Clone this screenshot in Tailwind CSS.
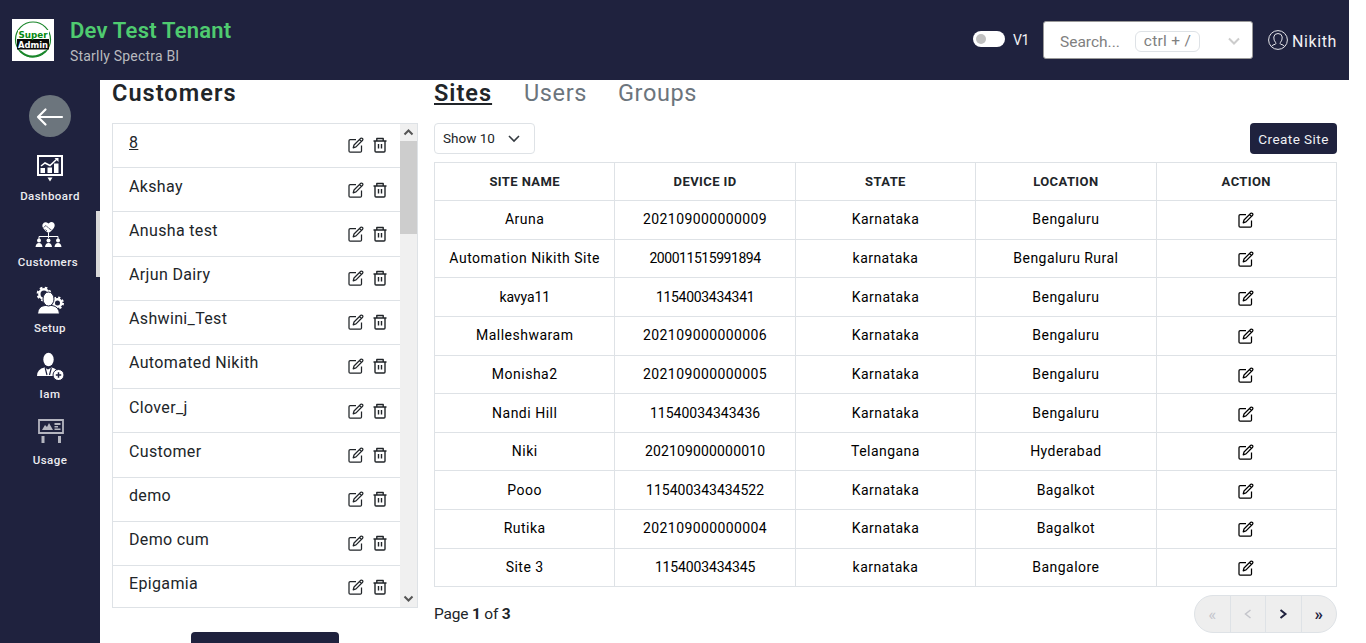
<!DOCTYPE html>
<html lang="en">
<head>
<meta charset="utf-8">
<title>Dev Test Tenant</title>
<script src="https://cdn.jsdelivr.net/npm/@tailwindcss/browser@4"></script>
</head>
<body class="h-[643px] overflow-hidden bg-white font-['Roboto',sans-serif] text-[#212529]">
<svg class="hidden">
  <symbol id="edit" viewBox="0 0 16 16"><path d="M8 2.5H2.2Q1 2.500 1 3.700V14Q1 15.200 2.200 15.200H12.300Q13.500 15.200 13.500 14V8.500M5.200 10.800 6 8 12.800 1.300Q13.600.7 14.500 1.500 15.200 2.400 14.600 3.200L8 9.900ZM11.500 2.600 13.300 4.400" fill="none" stroke="currentColor" stroke-width="1.250" stroke-linejoin="round"/></symbol>
  <symbol id="trash" viewBox="0 0 16 16"><path d="M1.500 4H14.500M4.800 3.800V1.500H11.200V3.800M3 4V14Q3 15 4 15H12Q13 15 13 14V4M6.500 7V11.500M9.500 7V11.500" fill="none" stroke="currentColor" stroke-width="1.400" stroke-linejoin="round"/></symbol>
</svg>
<div class="flex h-full w-[1349px] flex-col">
  <header class="flex h-20 shrink-0 items-center bg-[#1f223e] px-3">
    <svg class="size-[42px] bg-white" viewBox="0 0 42 42"><circle cx="21" cy="20.500" r="17.500" fill="none" stroke="#19862a" stroke-width="1.200"/><path d="M8 32Q20 43 34 32" fill="none" stroke="#19862a" stroke-width="1.800"/><rect x="6" y="11" width="31" height="9" fill="#fff"/><rect x="5" y="20" width="32" height="10.500" fill="#0b0b0b"/><text x="21" y="18.500" text-anchor="middle" textLength="29" lengthAdjust="spacingAndGlyphs" class="fill-[#078a13] font-['DejaVu_Sans'] text-[9px] font-bold">Super</text><text x="21" y="29" text-anchor="middle" textLength="30" lengthAdjust="spacingAndGlyphs" class="fill-white font-['DejaVu_Sans'] text-[9px] font-bold">Admin</text></svg>
    <div class="ml-4 flex flex-col">
      <div class="pt-px text-[22px] leading-[31px] font-semibold tracking-[0.220px] text-[#4fcb70]">Dev Test Tenant</div>
      <div class="text-[14px] leading-5 tracking-[0.200px] text-[#b9babf]">Starlly Spectra BI</div>
    </div>
    <div class="ml-auto flex items-center text-[#f1f1f4]">
      <div class="mb-[2px] flex h-4 w-8 items-center rounded-full bg-white pl-[3px]"><div class="size-[10px] rounded-full bg-[#c0c0c0]"></div></div>
      <div class="ml-2 w-[30px] text-[14px] tracking-[-0.300px]">V1</div>
      <div class="flex h-[38px] w-[210px] items-center rounded-[3px] border border-[#999] bg-white pl-4 text-[#808080]">
        <span class="w-[75px] pt-[5px] text-[15.500px]">Search...</span>
        <span class="mt-[3px] flex h-[21px] w-[65px] items-center justify-center rounded-md border border-[#dee2e6] pt-px text-[15.500px] tracking-[0.300px] whitespace-nowrap">ctrl + /</span>
        <svg class="mt-[2px] ml-7 size-3" viewBox="0 0 12 12"><path d="M1 3.500 6 8.500 11 3.500" fill="none" stroke="#ccc" stroke-width="2"/></svg>
      </div>
      <svg class="ml-[15px] size-5" viewBox="0 0 20 20" fill="none" stroke="#e6e6ea"><circle cx="10" cy="10" r="9.400"/><path d="M3.500 16.500Q4.200 14.800 7.400 14.200 8.200 13.800 7.600 12.500 5.600 10.500 5.800 7 6.200 3.500 10 3.500 13.800 3.500 14.200 7 14.400 10.500 12.400 12.500 11.800 13.800 12.600 14.200 15.800 14.800 16.500 16.500"/></svg>
      <div class="ml-1 w-[45px] pt-[3px] text-[16px] tracking-[0.600px]">Nikith</div>
    </div>
  </header>
  <div class="flex min-h-0 flex-1">
    <nav class="flex w-[100px] shrink-0 flex-col items-center bg-[#1f223e] pt-[15px] text-[11.500px] font-medium tracking-[0.450px] text-[#ececf0]">
      <div class="mb-2 flex size-[42px] items-center justify-center rounded-full bg-[#6c757d]"><svg class="mt-px size-7" viewBox="0 0 28 28"><path d="M26 14H2M9.500 6.500 2 14 9.500 21.500" fill="none" stroke="#fff" stroke-width="2.200" stroke-linecap="round" stroke-linejoin="round"/></svg></div>
      <div class="flex h-[66px] w-full flex-col items-center pt-[9px]">
        <svg class="size-7" viewBox="0 0 28 28" fill="#fff"><path d="M2 2H26V21H2Z" fill="none" stroke="#fff" stroke-width="2"/><path d="M4.500 14H9V19H4.500ZM11.500 13.500H16V19H11.500ZM18 9.500H22.500V19H18ZM11.500 23.500H16.500L14 27.500Z"/><path d="M5 12 9 9 14 11.500 21 5" fill="none" stroke="#fff" stroke-width="1.500"/><path d="M18.500 4H22.500V8Z"/></svg>
        <span class="mt-[6px] leading-4">Dashboard</span></div>
      <div class="flex h-[66px] w-full flex-col items-center border-r-4 border-[#d9d9d9] pt-[9px]">
        <svg class="size-7" viewBox="0 0 28 28" fill="#fff"><path d="M14.500 13Q7 8 8.500 4.500 10.500.5 14.500 3.500 18.500.5 20.500 4 22 8 14.500 13Z"/><path d="M9.500 7.500 12 5.500 15 8.500 17.500 10M13 11 11.500 9.500" fill="none" stroke="#1f223e" stroke-width=".7"/><path d="M14.500 13V18M5 19V16.500H24V19" fill="none" stroke="#fff"/><circle cx="5" cy="20.500" r="2"/><circle cx="14.500" cy="20.500" r="2"/><circle cx="24" cy="20.500" r="2"/><path d="M1.500 27Q2 23 5 23T8.500 27ZM11 27Q11.500 23 14.500 23T18 27ZM20.500 27Q21 23 24 23T27.500 27Z"/></svg>
        <span class="mt-[6px] leading-4">Customers</span></div>
      <div class="flex h-[66px] w-full flex-col items-center pt-[9px]">
        <svg class="size-7" viewBox="0 0 28 28" fill="#fff"><g fill="none" stroke="#fff"><circle cx="8" cy="8" r="4.700" stroke-width="2.400"/><circle cx="8" cy="8" r="6.400" stroke-width="2" stroke-dasharray="2.600 2.430"/><circle cx="21.500" cy="17" r="3.800" stroke-width="2.600"/><circle cx="21.500" cy="17" r="5.500" stroke-width="2" stroke-dasharray="2.200 2.120"/></g><path d="M1.500 28Q2 20 9 19.500H16Q23 20.500 23.500 28Z" stroke="#1f223e"/><ellipse cx="12.500" cy="13" rx="5.500" ry="7" stroke="#1f223e"/></svg>
        <span class="mt-[6px] leading-4">Setup</span></div>
      <div class="flex h-[66px] w-full flex-col items-center pt-[9px]">
        <svg class="size-7" viewBox="0 0 28 28" fill="#fff"><ellipse cx="12.500" cy="7.500" rx="5.200" ry="6.700"/><path d="M1 24Q1 17 8.500 15.500L12 17.500 15.500 15.500Q21 17 22 20L18 24Z"/><path d="M9.200 16 11 23M15.300 16 13.500 23" fill="none" stroke="#1f223e" stroke-width="1.200"/><circle cx="22.500" cy="23" r="5.500" stroke="#1f223e"/><path d="M22.500 20.300V25.700M19.800 23H25.200" stroke="#1f223e" stroke-width="1.500"/></svg>
        <span class="mt-[6px] leading-4">Iam</span></div>
      <div class="flex h-[66px] w-full flex-col items-center pt-[8px]">
        <svg class="ml-[2px] size-7" viewBox="0 0 28 28" fill="#b4b5bf"><path d="M2 3H26V16H2Z" fill="none" stroke="#b4b5bf" stroke-width="1.800"/><path d="M5 13 8 8 10 10 12 6 16 13ZM17.500 6H23.500V8H17.500ZM17.500 9H21V10.500H17.500ZM17.500 11.500H23.500V13H17.500ZM4.500 19H7.500V26H4.500ZM21 19H24V26H21Z"/></svg>
        <span class="mt-[7px] leading-4">Usage</span></div>
    </nav>
    <main class="flex min-w-0 flex-1 pl-3">
      <section class="flex w-[306px] flex-col">
        <h1 class="h-[43px] shrink-0 text-[23.500px] leading-[26px] font-semibold tracking-[1.050px]">Customers</h1>
        <div class="flex h-[485px] shrink-0 border border-[#dee2e6]">
          <div id="customers" class="h-full flex-1 overflow-hidden"></div>
          <div class="flex w-[17px] flex-col items-center bg-[#f0f0f0]">
            <svg class="size-[17px]" viewBox="0 0 17 17"><path d="M4.500 10.500 8.500 6.500 12.500 10.500" fill="none" stroke="#555" stroke-width="2"/></svg>
            <div class="h-[93px] w-full bg-[#cdcdcd]"></div>
            <svg class="mt-auto size-[17px]" viewBox="0 0 17 17"><path d="M4.500 6.500 8.500 10.500 12.500 6.500" fill="none" stroke="#555" stroke-width="2"/></svg>
          </div>
        </div>
        <div class="mt-6 h-9 w-[148px] shrink-0 self-center rounded bg-[#1f223e]"></div>
      </section>
      <section class="ml-4 flex w-[903px] flex-col">
        <div class="flex h-[43px] shrink-0 text-[23.500px] leading-[26px] text-[#6c757d]">
          <span class="w-[90px] font-semibold tracking-[1px] text-[#212529] underline decoration-2 underline-offset-2">Sites</span><span class="w-[94px] tracking-[0.600px]">Users</span><span class="tracking-[0.600px]">Groups</span>
        </div>
        <div class="flex h-[39px] shrink-0 items-start justify-between">
          <div class="flex h-[31px] w-[101px] items-center rounded border border-[#dee2e6] pl-2 text-[13.500px]"><span class="w-[65px]">Show 10</span><svg class="size-3" viewBox="0 0 12 12"><path d="M1 3 6 8 11 3" fill="none" stroke="#343a40" stroke-width="1.600"/></svg></div>
          <div class="flex h-[31px] w-[87px] items-center justify-center rounded bg-[#1f223e] pt-px text-[13.500px] tracking-[0.450px] whitespace-nowrap text-[#f1f1f4]">Create Site</div>
        </div>
        <table class="h-[425px] w-full shrink-0 table-fixed border-collapse text-center text-[14px]">
          <thead><tr class="h-[38px] text-[13px] font-bold tracking-[0.400px]"><td class="border border-[#dee2e6]">SITE NAME</td><td class="border border-[#dee2e6]">DEVICE ID</td><td class="border border-[#dee2e6]">STATE</td><td class="border border-[#dee2e6]">LOCATION</td><td class="border border-[#dee2e6]">ACTION</td></tr></thead>
          <tbody id="sites" class="text-black"></tbody>
        </table>
        <div class="flex h-[54px] shrink-0 items-center justify-between">
          <div class="text-[15.500px] tracking-[-0.200px]">Page <b>1</b> of <b>3</b></div>
          <div class="flex h-[38px] w-[143px] divide-x divide-[#dee2e6] overflow-hidden rounded-full border border-[#dee2e6] bg-[#eee] text-[17px] font-bold text-[#1f223e]">
            <span class="flex flex-1 items-center justify-center font-normal text-[#c4c5cb]">«</span>
            <span class="flex flex-1 items-center justify-center"><svg class="size-[10px]" viewBox="0 0 10 10"><path d="M7.500 1 2.500 5 7.500 9" fill="none" stroke="#c4c5cb" stroke-width="1.500"/></svg></span>
            <span class="flex flex-1 items-center justify-center"><svg class="size-[10px]" viewBox="0 0 10 10"><path d="M2.500 1 7.500 5 2.500 9" fill="none" stroke="#1f223e" stroke-width="2"/></svg></span>
            <span class="flex flex-1 items-center justify-center">»</span>
          </div>
        </div>
      </section>
    </main>
  </div>
</div>
<script>
const customers = ["8","Akshay","Anusha test","Arjun Dairy","Ashwini_Test","Automated Nikith","Clover_j","Customer","demo","Demo cum","Epigamia"];
document.getElementById("customers").innerHTML = customers.map((name, i) =>
  `<div class="flex h-[44.200px] justify-between border-b border-[#dee2e6] pr-3 pl-4"><span class="pt-[6.500px] text-[16px] leading-6 tracking-[0.350px] ${i ? "" : "underline"}">${name}</span><span class="flex gap-2 pt-[13.400px]"><svg class="size-4"><use href="#edit"/></svg><svg class="size-4"><use href="#trash"/></svg></span></div>`).join("");
// Each row: name, device id, state, location, letter spacing of the device id
const sites = [
  ["Aruna","202109000000009","Karnataka","Bengaluru","tracking-[0.400px]"],
  ["Automation Nikith Site","200011515991894","karnataka","Bengaluru Rural","tracking-[-0.450px]"],
  ["kavya11","1154003434341","Karnataka","Bengaluru","tracking-[-0.300px]"],
  ["Malleshwaram","202109000000006","Karnataka","Bengaluru","tracking-[0.400px]"],
  ["Monisha2","202109000000005","Karnataka","Bengaluru","tracking-[0.400px]"],
  ["Nandi Hill","11540034343436","Karnataka","Bengaluru","tracking-[0px]"],
  ["Niki","202109000000010","Telangana","Hyderabad","tracking-[0.150px]"],
  ["Pooo","115400343434522","Karnataka","Bagalkot","tracking-[0px]"],
  ["Rutika","202109000000004","Karnataka","Bagalkot","tracking-[0.400px]"],
  ["Site 3","1154003434345","karnataka","Bangalore","tracking-[-0.150px]"]];
document.getElementById("sites").innerHTML = sites.map(([name, id, state, place, spacing]) =>
  `<tr class="h-[38.650px]"><td class="border border-[#dee2e6] ${name === "kavya11" ? "tracking-[-0.100px]" : "tracking-[0.500px]"}">${name}</td><td class="border border-[#dee2e6] ${spacing}">${id}</td><td class="border border-[#dee2e6] tracking-[0.450px]">${state}</td><td class="border border-[#dee2e6] tracking-[0.450px]">${place}</td><td class="border border-[#dee2e6]"><svg class="mx-auto mt-px size-4"><use href="#edit"/></svg></td></tr>`).join("");
</script>
</body>
</html>
